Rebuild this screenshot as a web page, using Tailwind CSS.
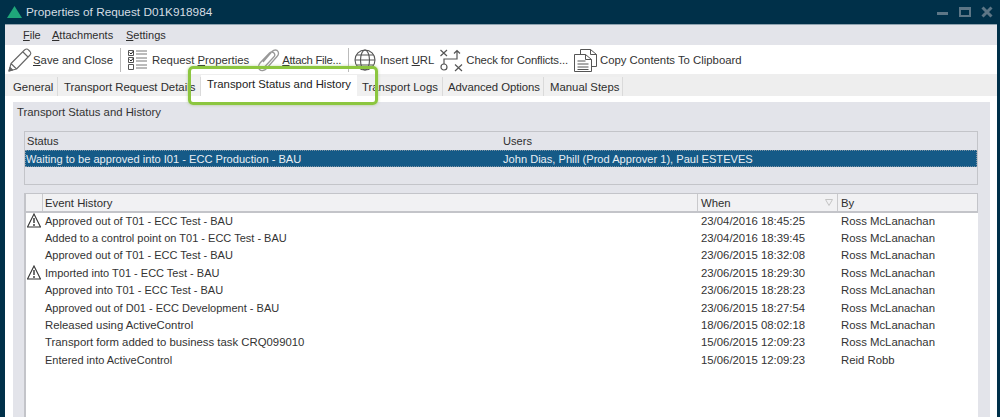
<!DOCTYPE html>
<html lang="en">
<head>
  <meta charset="UTF-8" />
  <title>Properties of Request D01K918984</title>
  <script src="https://cdn.jsdelivr.net/npm/@tailwindcss/browser@4"></script>
</head>
<body class="bg-[#003049] h-[417px] w-[1000px] overflow-hidden font-['Liberation_Sans',Arial,sans-serif] text-[11.35px] leading-[14px] text-[#2e2e2e]">
  <div class="relative flex flex-col h-[417px]">

    <!-- title bar -->
    <div class="flex items-center h-[24px] pl-[7px] pr-[6px] text-[#d5dde3] shrink-0">
      <svg width="15" height="12" viewBox="0 0 15 12" class="mr-[4px]"><path d="M7.500 0 L15 12 H0 Z" fill="#1fa67a"/></svg>
      <span class="text-[11.8px]">Properties of Request D01K918984</span>
      <div class="ml-auto flex items-center gap-[10px] pr-[1px]">
        <svg width="12" height="12" viewBox="0 0 12 12"><rect x="0" y="6" width="11" height="3" fill="#5d7686"/></svg>
        <svg width="12" height="12" viewBox="0 0 12 12"><path d="M1 2h10v8H1z" fill="none" stroke="#5d7686" stroke-width="2"/><rect x="1" y="1" width="10" height="3" fill="#5d7686"/></svg>
        <svg width="12" height="12" viewBox="0 0 12 12"><path d="M1.500 1.500 L10.500 10.500 M10.500 1.500 L1.500 10.500" stroke="#5d7686" stroke-width="3"/></svg>
      </div>
    </div>

    <!-- window body -->
    <div class="ml-[5px] mr-[3px] flex-1 flex flex-col min-h-0 bg-white">
      <!-- menu -->
      <div class="h-[21px] bg-[#e3e4ea] flex items-center pl-[18px] shrink-0 border-t border-[#8fa3b0] text-[11px]">
        <span class="w-[29px]"><u>F</u>ile</span>
        <span class="w-[74px]"><u>A</u>ttachments</span>
        <span><u>S</u>ettings</span>
      </div>

      <!-- toolbar -->
      <div class="h-[29px] flex items-center pl-[3px] shrink-0 text-[#333]">
        <svg width="24" height="24" viewBox="0 0 24 24" fill="none" stroke="#666" stroke-width="1.100" stroke-linejoin="round"><path d="M1 23 L3 15.500 L16.500 2 C18 0.800 19.500 0.800 20.500 2 L22 3.500 C23 4.800 23 6 22 7 L8.500 21 Z M3 15.500 L8.500 21 M15 4 L20.500 9.500"/><path d="M1 23 L2 19.500 L4.500 22 Z" fill="#666"/></svg>
        <span class="ml-[1px]"><u>S</u>ave and Close</span>
        <div class="w-px h-[24px] bg-[#bbb] ml-[7px]"></div>
        <svg width="22" height="22" viewBox="0 0 22 22" class="ml-[6px]" fill="none" stroke="#777"><path d="M9 2h11M9 5h11M9 9h11M9 12h11M9 16h11M9 19h11"/><path d="M1.500 1.500h5v5h-5zM1.500 8.500h5v5h-5zM1.500 15.500h5v5h-5z" stroke="#555"/><path d="M2.500 3.500l1.500 1.500 2.500-3M2.500 10.500l1.500 1.500 2.500-3" stroke="#222"/></svg>
        <span class="ml-[3px]">Request <u>P</u>roperties</span>
        <svg width="24" height="24" viewBox="0 0 24 24" class="ml-[7px]" fill="none" stroke="#999" stroke-width="1.300"><path d="M7 14 L16 3.500 C18 1.500 21 1.500 22 3.500 C23 5.500 22.500 7 21 8.500 L10.500 20.500 C8.500 23 5 23 3.500 21.500 C2 20 2.500 17 4 15 L13.500 5 C15 3.800 17 4 18 5 C19 6.200 18.800 8 17.800 9 L9 18.500"/></svg>
        <span class="ml-[2px] tracking-[-0.3px]"><u>A</u>ttach File...</span>
        <div class="w-px h-[24px] bg-[#bbb] ml-[7px]"></div>
        <svg width="22" height="22" viewBox="0 0 22 22" class="ml-[5px]" fill="none" stroke="#555" stroke-width="1.100"><circle cx="11" cy="11" r="10"/><ellipse cx="11" cy="11" rx="4.500" ry="10"/><path d="M1 11h20M2.500 6h17M2.500 16h17"/></svg>
        <span class="ml-[4px]">Insert <u>U</u>RL</span>
        <svg width="23" height="24" viewBox="0 0 23 24" class="ml-[6px]" fill="none" stroke="#555" stroke-width="1.200"><path d="M0.500 2 L7 8 M7 2 L0.500 8 M15 16.500 L22 23 M22 16.500 L15 23 M4 16 V11 H17 V2.500 M14 5.500 L17 2.500 L20 5.500"/><circle cx="4" cy="19" r="3"/></svg>
        <span class="ml-[3px] tracking-[-0.14px]">Check for Conflicts...</span>
        <svg width="24" height="24" viewBox="0 0 24 24" class="ml-[6px]" fill="none" stroke="#555"><path d="M6.500 6V1.500h10l6 5v12h-4.500M16.500 1.500v5h6"/><path d="M0.500 6.500h11l6 5v12h-17zM11.500 6.500v5h6M3.500 13h8M3.500 16h11M3.500 19h11M3.500 21.500h11"/></svg>
        <span class="ml-[2px]">Copy Contents To Clipboard</span>
      </div>

      <!-- tabs -->
      <div class="h-[22px] bg-[#eeeeee] flex items-end pl-[3px] shrink-0">
        <div class="w-[50px] h-[19px] pl-[5px] flex items-center bg-[#f0f0f0] border-r border-[#dadada]">General</div>
        <div class="w-[143px] h-[19px] pl-[6px] flex items-center bg-[#f0f0f0] border-r border-[#dadada]">Transport Request Details</div>
        <div class="w-[156px] h-[21px] pl-[6px] flex items-center bg-white text-[#222] pb-[4px]">Transport Status and History</div>
        <div class="w-[86px] h-[19px] pl-[5px] flex items-center bg-[#f0f0f0] border-r border-[#dadada]">Transport Logs</div>
        <div class="w-[101px] h-[19px] pl-[5px] flex items-center bg-[#f0f0f0] border-r border-[#dadada] tracking-[-0.05px]">Advanced Options</div>
        <div class="w-[79px] h-[19px] pl-[6px] flex items-center bg-[#f0f0f0] border-r border-[#dadada]">Manual Steps</div>
      </div>

      <!-- tab page -->
      <div class="flex-1 min-h-0 pt-[6px] pl-[8px] pr-[7px] flex flex-col">
        <div class="flex-1 min-h-0 bg-[#e3e4ea] flex flex-col pl-[11px] pr-[12px]">
          <div class="h-[20px] -ml-[7px] pt-[3px] text-[#333]">Transport Status and History</div>

          <!-- status table -->
          <div class="mt-[9px] h-[54px] border border-[#c3c4c9] shrink-0 text-[11.1px]">
            <div class="grid grid-cols-[476px_1fr] h-[18px] items-center pl-[2px]">
              <div>Status</div>
              <div>Users</div>
            </div>
            <div class="grid grid-cols-[477px_1fr] h-[17px] items-center bg-[#155a87] text-[#e8eef3] border border-dotted border-[#7d93a3]">
              <div>Waiting to be approved into I01 - ECC Production - BAU</div>
              <div>John Dias, Phill (Prod Approver 1), Paul ESTEVES</div>
            </div>
          </div>

          <!-- event history -->
          <div class="mt-[8px] flex-1 min-h-0 bg-white border-l-2 border-[#c3c4c9]">
            <div class="grid grid-cols-[17px_655px_140px_1fr] h-[20px] bg-[#f1f1f3] border-t border-r border-[#c3c4c9] border-b-2">
              <div class="border-r border-[#c9c9cc]"></div>
              <div class="pl-[2px] flex items-center border-r border-[#c9c9cc]">Event History</div>
              <div class="pl-[3px] flex items-center justify-between pr-[4px] border-r border-[#c9c9cc]">When
                <svg width="8" height="7" viewBox="0 0 8 7"><path d="M0.500 0.500h7L4 6.500z" fill="none" stroke="#c4c4c4"/></svg>
              </div>
              <div class="pl-[3px] flex items-center">By</div>
            </div>
            <div class="-mt-[1px] grid grid-cols-[19px_656px_140px_1fr] auto-rows-[17.400px] items-center text-[#333]">
              <svg width="14" height="15" viewBox="0 0 14 15" class="ml-[1px]"><path d="M7 1 L13.500 14 H0.500 Z" fill="#fff" stroke="#333" stroke-width="1.100"/><path d="M7 5v5M7 11v2" stroke="#222" stroke-width="1.300"/></svg>
              <div class="text-[11px]">Approved out of T01 - ECC Test - BAU</div><div>23/04/2016 18:45:25</div><div>Ross McLanachan</div>
              <span></span>
              <div class="text-[11px]">Added to a control point on T01 - ECC Test - BAU</div><div>23/04/2016 18:39:45</div><div>Ross McLanachan</div>
              <span></span>
              <div class="text-[11px]">Approved out of T01 - ECC Test - BAU</div><div>23/06/2015 18:32:08</div><div>Ross McLanachan</div>
              <svg width="14" height="15" viewBox="0 0 14 15" class="ml-[1px]"><path d="M7 1 L13.500 14 H0.500 Z" fill="#fff" stroke="#333" stroke-width="1.100"/><path d="M7 5v5M7 11v2" stroke="#222" stroke-width="1.300"/></svg>
              <div class="text-[11px]">Imported into T01 - ECC Test - BAU</div><div>23/06/2015 18:29:30</div><div>Ross McLanachan</div>
              <span></span>
              <div class="text-[11px]">Approved into T01 - ECC Test - BAU</div><div>23/06/2015 18:28:23</div><div>Ross McLanachan</div>
              <span></span>
              <div class="text-[11px]">Approved out of D01 - ECC Development - BAU</div><div>23/06/2015 18:27:54</div><div>Ross McLanachan</div>
              <span></span>
              <div>Released using ActiveControl</div><div>18/06/2015 08:02:18</div><div>Ross McLanachan</div>
              <span></span>
              <div>Transport form added to business task CRQ099010</div><div>15/06/2015 12:09:23</div><div>Ross McLanachan</div>
              <span></span>
              <div class="text-[11px]">Entered into ActiveControl</div><div>15/06/2015 12:09:23</div><div>Reid Robb</div>
            </div>
          </div>
        </div>
      </div>
    </div>

    <!-- green callout round the active tab -->
    <div class="absolute left-[188px] top-[66px] w-[190px] h-[39px] rounded-[5px] border-[3px] border-[#8cc63f] shadow-[0_0_3px_rgba(120,170,60,0.5)]"></div>
  </div>
</body>
</html>
